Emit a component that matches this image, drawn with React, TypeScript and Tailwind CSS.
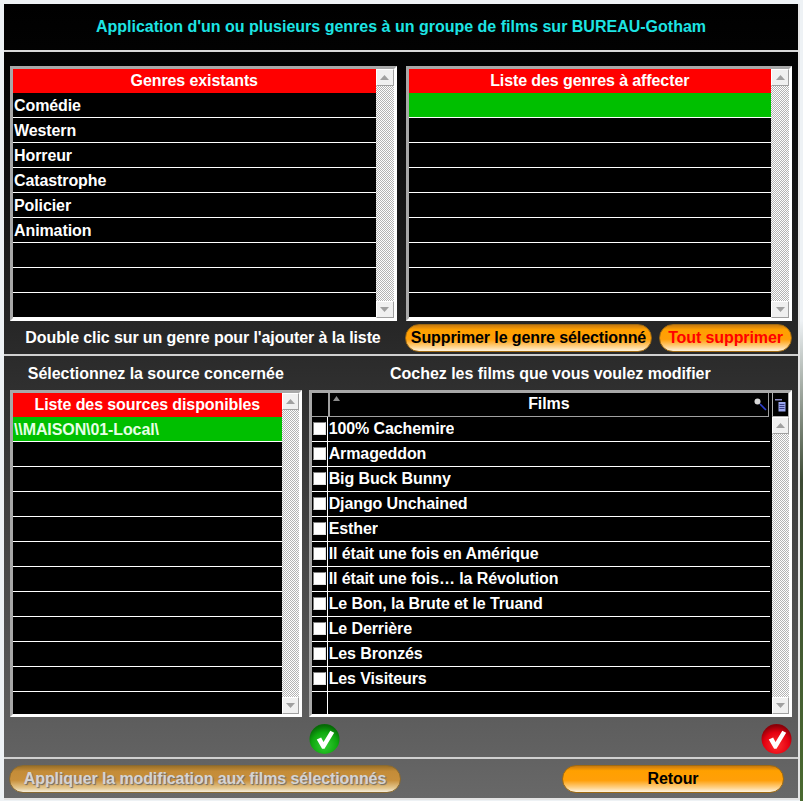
import React from "react";

const genres = ["Comédie", "Western", "Horreur", "Catastrophe", "Policier", "Animation", "", "", ""];
const films = [
  "100% Cachemire",
  "Armageddon",
  "Big Buck Bunny",
  "Django Unchained",
  "Esther",
  "Il était une fois en Amérique",
  "Il était une fois… la Révolution",
  "Le Bon, la Brute et le Truand",
  "Le Derrière",
  "Les Bronzés",
  "Les Visiteurs",
  "",
];

function Arrow({ down }: { down?: boolean }) {
  return (
    <svg width="9" height="5" viewBox="0 0 9 5">
      <path d={down ? "M0 0H9L4.5 5Z" : "M4.5 0L9 5H0Z"} fill="#a0a0a0" />
    </svg>
  );
}

function ScrollButton({ down }: { down?: boolean }) {
  return (
    <div className="h-[17px] shrink-0 flex items-center justify-center bg-[#f0f0f0] border border-t-white border-l-white border-r-[#a0a0a0] border-b-[#a0a0a0]">
      <Arrow down={down} />
    </div>
  );
}

function Scrollbar({ wide }: { wide?: boolean }) {
  return (
    <div className={`${wide ? "w-[18px]" : "w-[17px]"} shrink-0 flex flex-col`}>
      <ScrollButton />
      <div className="flex-1 bg-[repeating-conic-gradient(#ffffff_0_25%,#b4b4b4_0_50%)] bg-[length:2px_2px]" />
      <ScrollButton down />
    </div>
  );
}

function Row({ text, green }: { text: string; green?: boolean }) {
  return (
    <div
      className={`h-[25px] shrink-0 pl-[1px] leading-[26px] border-b border-white truncate ${
        green ? "bg-[#00bf00] text-[#e6ffe6]" : "bg-black text-white"
      }`}
    >
      {text}
    </div>
  );
}

function ListPanel({ title, rows, wide }: { title: string; rows: { text: string; green?: boolean }[]; wide?: boolean }) {
  return (
    <div
      className={`flex border-[3px] border-t-[#a8a8a8] border-l-[#a8a8a8] border-r-white border-b-white bg-black overflow-hidden ${
        wide ? "w-[387px] h-[255px]" : "w-[292px] h-[327px]"
      }`}
    >
      <div className="flex-1 min-w-0 flex flex-col overflow-hidden">
        <div className="h-[24px] shrink-0 bg-[#ff0000] text-white text-center leading-[24px]">{title}</div>
        {rows.map((r, i) => (
          <Row key={i} text={r.text} green={r.green} />
        ))}
      </div>
      <Scrollbar wide={wide} />
    </div>
  );
}

function FilmRow({ name }: { name: string }) {
  return (
    <div className="h-[25px] shrink-0 flex border-b border-white bg-black text-white">
      <div className="w-[16px] shrink-0 flex items-center justify-center pb-[1px] border-r border-white">
        {name && <div className="w-[13px] h-[13px] bg-white border border-t-[#808080] border-l-[#808080] border-r-[#e0e0e0] border-b-[#e0e0e0]" />}
      </div>
      <div className="pl-[1px] leading-[24px] truncate">{name}</div>
    </div>
  );
}

function PillButton({ label, className }: { label: string; className: string }) {
  return (
    <button
      className={`h-[28px] rounded-full text-center leading-[26px] border border-[#a06a10] bg-[linear-gradient(to_bottom,#c87a10_0%,#ffa000_18%,#ff9f08_55%,#ffd590_85%,#fff4e0_100%)] ${className}`}
    >
      {label}
    </button>
  );
}

function RoundCheck({ color }: { color: "green" | "red" }) {
  const id = `round-${color}`;
  const light = color === "green" ? "#35d035" : "#ff3030";
  const mid = color === "green" ? "#0fa80f" : "#e40010";
  const dark = color === "green" ? "#066a06" : "#8a0008";
  return (
    <svg width="32" height="32" viewBox="0 0 32 32">
      <defs>
        <radialGradient id={id} cx="50%" cy="70%" r="65%">
          <stop offset="0%" stopColor={light} />
          <stop offset="65%" stopColor={mid} />
          <stop offset="100%" stopColor={dark} />
        </radialGradient>
      </defs>
      <circle cx="16" cy="16" r="15.5" fill={`url(#${id})`} />
      <path d="M8 16.5L12.5 14.5L15 19L22 7.5L26 9.5L16 26H13.5Z" fill="#ffffff" />
    </svg>
  );
}

export default function App() {
  return (
    <div className="relative w-[803px] h-[801px] overflow-hidden bg-[#eef2f5] pl-[4px] pt-[4px] font-['Liberation_Sans',Arial,sans-serif] font-bold text-[16px] tracking-[-0.1px]">
      <div className="absolute right-0 top-0 w-[3px] h-[801px] bg-[linear-gradient(to_bottom,#eef2f5_0%,#eef2f5_40%,#3c4a34_60%,#4a6a30_100%)]" />
      <div className="w-[796px] h-[796px] flex flex-col border-r-2 border-b-2 border-[#e4e4e4] bg-[linear-gradient(to_bottom,#000000_0%,#030303_8%,#686868_100%)]">
        <div className="h-[48px] shrink-0 flex items-center justify-center border-b-2 border-[#d8d8d8] text-[16px] tracking-[0px] text-[#1de4e4]">
          Application d'un ou plusieurs genres à un groupe de films sur BUREAU-Gotham
        </div>

        <div className="h-[304px] shrink-0 flex flex-col px-[6px] pt-[14px] border-b-2 border-[#d0d0d0]">
          <div className="flex gap-[9px]">
            <ListPanel wide title="Genres existants" rows={genres.map((g) => ({ text: g }))} />
            <ListPanel
              wide
              title="Liste des genres à affecter"
              rows={[{ text: "", green: true }, ...Array.from({ length: 8 }, () => ({ text: "" }))]}
            />
          </div>
          <div className="flex mt-[3px] items-center">
            <div className="w-[387px] text-center text-white">Double clic sur un genre pour l'ajouter à la liste</div>
            <div className="ml-[9px] flex gap-[7px]">
              <PillButton label="Supprimer le genre sélectionné" className="w-[247px] text-black" />
              <PillButton label="Tout supprimer" className="w-[133px] text-[#ff0000]" />
            </div>
          </div>
        </div>

        <div className="h-[403px] shrink-0 flex flex-col px-[6px] border-b-2 border-[#d0d0d0]">
          <div className="h-[34px] shrink-0 flex items-center pt-[2px] tracking-[-0.03px] text-white">
            <div className="w-[292px] text-center">Sélectionnez la source concernée</div>
            <div className="ml-[7px] w-[484px] text-center">Cochez les films que vous voulez modifier</div>
          </div>
          <div className="flex gap-[7px]">
            <ListPanel
              title="Liste des sources disponibles"
              rows={[{ text: "\\\\MAISON\\01-Local\\", green: true }, ...Array.from({ length: 11 }, () => ({ text: "" }))]}
            />
            <div className="w-[484px] h-[327px] flex flex-col border-[3px] border-t-[#a8a8a8] border-l-[#a8a8a8] border-r-white border-b-white bg-black overflow-hidden">
              <div className="h-[24px] shrink-0 flex text-white">
                <div className="w-[17px] shrink-0 border border-[#a0a0a0] border-t-0 border-l-0" />
                <div className="relative flex-1 text-center leading-[22px] border-b border-r border-l border-[#a0a0a0]">
                  Films
                  <svg className="absolute left-[3px] top-[3px]" width="7" height="5" viewBox="0 0 7 5">
                    <path d="M3.5 0L7 5H0Z" fill="#8c8c8c" />
                  </svg>
                  <svg className="absolute right-[1px] top-[5px]" width="13" height="13" viewBox="0 0 13 13">
                    <circle cx="3.5" cy="3.5" r="3" fill="#d8d8d8" />
                    <path d="M6 6L12 12" stroke="#3040d0" strokeWidth="1.6" />
                  </svg>
                </div>
                <div className="w-[17px] ml-[3px] shrink-0 flex items-center justify-center border border-t-0 border-[#b0b0b0]">
                  <svg width="11" height="14" viewBox="0 0 11 14">
                    <path d="M0 1H7V2.5H0Z" fill="#8a8ac0" />
                    <path d="M3.5 4H10.5V13.5H3.5Z" fill="#9aa6ee" />
                    <path d="M4.5 6.5H9.5M4.5 8.5H9.5M4.5 10.5H9.5" stroke="#20206a" strokeWidth="0.8" />
                  </svg>
                </div>
              </div>
              <div className="flex-1 min-h-0 flex">
                <div className="flex-1 min-w-0 flex flex-col overflow-hidden pr-[2px]">
                  {films.map((f, i) => (
                    <FilmRow key={i} name={f} />
                  ))}
                </div>
                <Scrollbar />
              </div>
            </div>
          </div>
          <div className="flex justify-end gap-[421px] pt-[6px] pl-[299px]">
            <RoundCheck color="green" />
            <RoundCheck color="red" />
          </div>
        </div>

        <div className="flex-1 flex items-center pl-[5px]">
          <button className="w-[392px] h-[28px] rounded-full text-center leading-[26px] text-[#d4d4d4] [text-shadow:1px_1px_1px_#6a6a6a] border border-[#8a6a30] bg-[linear-gradient(to_bottom,#9a7028_0%,#c48c38_20%,#c8903c_55%,#e4c890_85%,#f4ecdc_100%)]">
            Appliquer la modification aux films sélectionnés
          </button>
          <PillButton label="Retour" className="ml-[161px] w-[222px] text-black" />
        </div>
      </div>
    </div>
  );
}
